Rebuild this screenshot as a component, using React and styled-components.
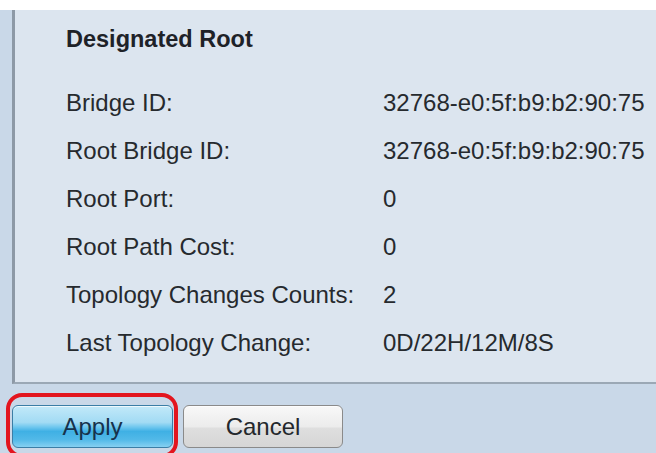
import React from 'react';
import styled, { createGlobalStyle } from 'styled-components';

const GlobalStyle = createGlobalStyle`
    html, body {
        margin: 0;
        padding: 0;
        background: #c9d8e8;
    }
    body {
        font-family: "Liberation Sans", Arial, sans-serif;
        color: #222;
        overflow: hidden;
    }
`

const Page = styled.div`
    width: 656px;
    height: 453px;
    overflow: hidden;
    display: flex;
    flex-direction: column;
    border-top: 10px solid #ffffff;
    padding-left: 12px;
    box-sizing: border-box;
`

const Panel = styled.section`
    background: #dce5ef;
    border-left: 3px solid #8d99a6;
    border-bottom: 2px solid #9ba8b5;
    padding: 5px 0 15px 51px;
`

const Heading = styled.h3`
    margin: 0 0 16px;
    font-size: 23.5px;
    font-weight: 700;
    line-height: 48px;
    color: #1e2228;
`

const InfoGrid = styled.div`
    display: grid;
    grid-template-columns: 317px 1fr;
    grid-auto-rows: 48px;
    font-size: 24px;
    line-height: 48px;
    color: #262a2e;
`

const Label = styled.div`
    white-space: nowrap;
`

const Value = styled.div`
    white-space: nowrap;
`

const Actions = styled.div`
    display: flex;
    gap: 10px;
    margin-top: 21px;
`

const Highlight = styled.div`
    position: relative;

    &::after {
        content: '';
        position: absolute;
        top: -12px;
        left: -6px;
        right: -5px;
        bottom: -10px;
        border: 4px solid #e3151e;
        border-radius: 16px;
        pointer-events: none;
    }
`

const Button = styled.button`
    width: ${p => p.$width}px;
    height: 43px;
    border-radius: 6px;
    font-family: "Liberation Sans", Arial, sans-serif;
    font-size: 24px;
    padding: 0;
    cursor: pointer;
    border: 1px solid ${p => p.$primary ? '#3b7ea6' : '#8a8a8a'};
    color: ${p => p.$primary ? '#17324c' : '#24282c'};
    background: ${p => p.$primary
        ? 'linear-gradient(180deg, #c2e9f9 0%, #a2dbf4 40%, #6cc6ee 52%, #3fb0e4 62%, #52b9e8 82%, #86d0f1 100%)'
        : 'linear-gradient(180deg, #f8f8f8 0%, #ececec 50%, #dedede 55%, #d6d6d6 100%)'};
    box-shadow: inset 0 1px 0 rgba(255, 255, 255, 0.7);
`

const rows = [
    ['Bridge ID:', '32768-e0:5f:b9:b2:90:75'],
    ['Root Bridge ID:', '32768-e0:5f:b9:b2:90:75'],
    ['Root Port:', '0'],
    ['Root Path Cost:', '0'],
    ['Topology Changes Counts:', '2'],
    ['Last Topology Change:', '0D/22H/12M/8S'],
]

const App = () => (
    <Page>
        <GlobalStyle />
        <Panel>
            <Heading>Designated Root</Heading>
            <InfoGrid>
                {rows.map(([label, value]) => (
                    <React.Fragment key={label}>
                        <Label>{label}</Label>
                        <Value>{value}</Value>
                    </React.Fragment>
                ))}
            </InfoGrid>
        </Panel>
        <Actions>
            <Highlight>
                <Button $primary $width={161}>Apply</Button>
            </Highlight>
            <Button $width={160}>Cancel</Button>
        </Actions>
    </Page>
)

export default App;
